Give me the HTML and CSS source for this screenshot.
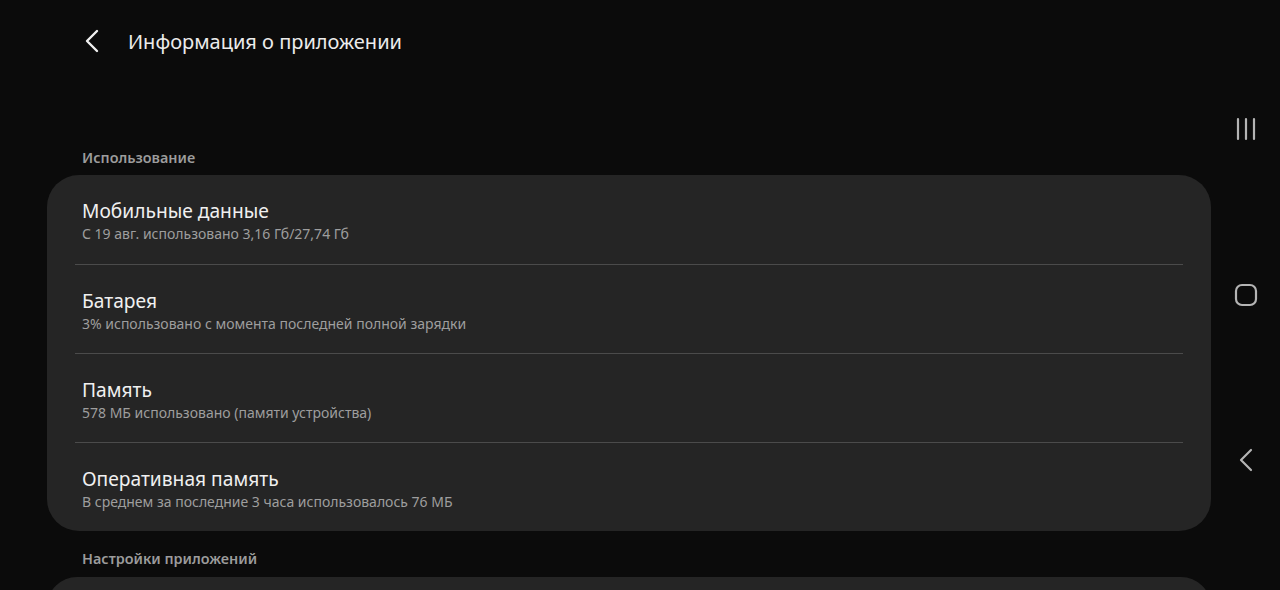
FILE: index.html
```html
<!DOCTYPE html>
<html>
<head>
<meta charset="utf-8"/>
<title>Информация о приложении</title>
<link rel="stylesheet" href="styles.css">
</head>
<body>
<div class="screen">
	<div class="main">
		<div class="top">
			<svg class="back" width="16" height="24" viewBox="0 0 16 24"><path d="M13 2 L3 12 L13 22" fill="none" stroke="#f0f0f0" stroke-width="2.4" stroke-linecap="round" stroke-linejoin="round"/></svg>
			<span class="title">Информация о приложении</span>
		</div>

		<div class="sect">Использование</div>
		<div class="card">
			<div class="row">
				<div class="rt">Мобильные данные</div>
				<div class="rs">С 19 авг. использовано 3,16 Гб/27,74 Гб</div>
			</div>
			<div class="row">
				<div class="rt">Батарея</div>
				<div class="rs">3% использовано с момента последней полной зарядки</div>
			</div>
			<div class="row">
				<div class="rt">Память</div>
				<div class="rs">578 МБ использовано (памяти устройства)</div>
			</div>
			<div class="row">
				<div class="rt">Оперативная память</div>
				<div class="rs">В среднем за последние 3 часа использовалось 76 МБ</div>
			</div>
		</div>

		<div class="sect">Настройки приложений</div>
		<div class="card next"></div>
	</div>

	<div class="nav">
		<svg width="24" height="24" viewBox="0 0 24 24"><path d="M4 2 V22 M12 2 V22 M20 2 V22" stroke="#b4b4b4" stroke-width="2.2" stroke-linecap="round"/></svg>
		<svg width="24" height="24" viewBox="0 0 24 24"><rect x="2" y="2" width="20" height="20" rx="6" fill="none" stroke="#b4b4b4" stroke-width="2.2"/></svg>
		<svg width="24" height="24" viewBox="0 0 24 24"><path d="M17 2 L7 12 L17 22" fill="none" stroke="#b4b4b4" stroke-width="2.2" stroke-linecap="round" stroke-linejoin="round"/></svg>
	</div>
</div>
</body>
</html>
```

FILE: styles.css
```css
html, body { margin: 0; padding: 0; background: #0b0b0b; font-family: "Noto Sans", Roboto, sans-serif; overflow: hidden; }
.screen { display: grid; grid-template-columns: 1211px 69px; height: 590px; }
.main { padding-left: 47px; }
.top { display: flex; align-items: center; height: 82px; padding-left: 37px; gap: 28px; }
.back { display: block; }
.title { color: #ececec; font-size: 20px; }
.sect { color: #9c9c9c; font-size: 14.4px; font-weight: 600; padding: 66px 0 0 35px; height: 27px; line-height: 20px; }
.card { background: #252525; border-radius: 32px; padding: 0 28px; }
.card ~ .sect { padding-top: 18px; height: 28px; }
.row { height: 89px; padding: 23px 7px 0; box-sizing: border-box; }
.row + .row { border-top: 1px solid #4b4b4b; }
.rt { color: #f0f0f0; font-size: 19.2px; line-height: 26px; }
.rs { color: #9e9e9e; font-size: 14px; line-height: 20px; }
.next { height: 60px; }
.nav { display: flex; flex-direction: column; align-items: center; justify-content: space-between; padding: 117px 0 118px; box-sizing: border-box; height: 590px; }
.nav svg { display: block; }
```
